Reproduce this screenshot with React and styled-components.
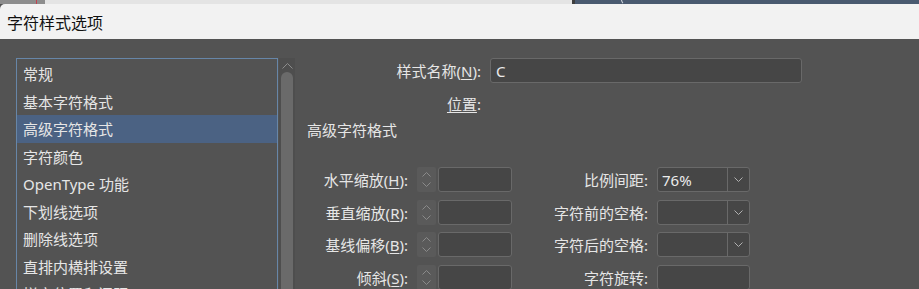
import React from "react";
import styled, { createGlobalStyle } from "styled-components";

const GlobalStyle = createGlobalStyle`
  html, body {
    margin: 0;
    padding: 0;
    width: 919px;
    height: 289px;
    overflow: hidden;
    background: #535353;
  }
  body {
    font-family: "Noto Sans", "Noto Sans CJK SC", sans-serif;
  }
`;

const categories = [
  "常规",
  "基本字符格式",
  "高级字符格式",
  "字符颜色",
  "OpenType 功能",
  "下划线选项",
  "删除线选项",
  "直排内横排设置",
  "拼音位置和间距"
];

const Window = styled.div`
  width: 919px;
  height: 289px;
  display: flex;
  flex-direction: column;
  background: #535353;
`;

// strip of the window that sits behind the dialog
const BackStrip = styled.div`
  height: 4px;
  display: flex;
  flex: none;
`;

const BackPiece = styled.div`
  width: ${p => p.w}px;
  flex: ${p => (p.grow ? 1 : "none")};
  background: ${p => p.color};
  position: relative;
`;

const Arc = styled.div`
  position: absolute;
  left: 46px;
  top: -6px;
  width: 9px;
  height: 9px;
  border: 1px solid #d8dde4;
  border-radius: 50%;
  border-right-color: transparent;
  border-bottom-color: transparent;
`;

const TitleBar = styled.div`
  height: 35px;
  flex: none;
  background: #f2f2f2;
  border-top-left-radius: 5px;
  display: flex;
  align-items: center;
  padding-left: 7px;
  font-family: "Noto Sans CJK SC", sans-serif;
  font-size: 16px;
  color: #111;
`;

const Body = styled.div`
  flex: 1;
  display: flex;
  overflow: hidden;
`;

const ListColumn = styled.div`
  display: flex;
  padding: 19px 0 0 16px;
  gap: 1px;
  flex: none;
`;

const ListBox = styled.div`
  width: 260px;
  border: 1px solid #6786a8;
  border-bottom: none;
  padding-top: 1px;
  display: flex;
  flex-direction: column;
`;

const Item = styled.div`
  height: 27.5px;
  flex: none;
  display: flex;
  align-items: center;
  padding-left: 6px;
  font-size: 15px;
  color: #e6e6e6;
  background: ${p => (p.selected ? "#4b6283" : "transparent")};
`;

const Scrollbar = styled.div`
  width: 16px;
  background: #4e4e4e;
  display: flex;
  flex-direction: column;
  align-items: center;
`;

const ScrollArrow = styled.svg`
  margin-top: 5px;
  flex: none;
`;

const Thumb = styled.div`
  width: 12px;
  flex: 1;
  margin-top: 3px;
  background: #6a6a6a;
  border-radius: 6px 6px 0 0;
`;

const Panel = styled.div`
  flex: 1;
  display: flex;
  flex-direction: column;
  padding: 19px 0 0 12px;
  font-size: 15px;
  color: #e6e6e6;
`;

const Row = styled.div`
  display: flex;
  align-items: center;
  height: ${p => p.h || 25}px;
  margin-top: ${p => p.mt || 0}px;
`;

const Label = styled.div`
  width: ${p => p.w}px;
  flex: none;
  text-align: right;
  white-space: nowrap;
  margin-right: 9px;
`;

const Key = styled.span`
  text-decoration: underline;
  text-underline-offset: 2px;
`;

const TextBox = styled.div`
  width: ${p => p.w}px;
  height: 25px;
  box-sizing: border-box;
  background: #464646;
  border: 1px solid #696969;
  border-radius: 3px;
  display: flex;
  align-items: center;
  padding-left: 5px;
  color: #ececec;
  font-size: 15px;
`;

const Heading = styled.div`
  height: 20px;
  margin-top: 6px;
  display: flex;
  align-items: center;
`;

const FieldGrid = styled.div`
  margin-top: 28px;
  display: flex;
  flex-direction: column;
  gap: 7.7px;
`;

const Spinner = styled.div`
  width: 19px;
  height: 25px;
  flex: none;
  background: #5a5a5a;
  border-radius: 2px;
  margin-right: 2px;
  display: flex;
  flex-direction: column;
  align-items: center;
  justify-content: center;
  gap: 5px;
`;

const Combo = styled.div`
  width: 93px;
  height: 25px;
  box-sizing: border-box;
  background: #464646;
  border: 1px solid #696969;
  border-radius: 3px;
  display: flex;
  flex: none;
`;

const ComboValue = styled.div`
  flex: 1;
  display: flex;
  align-items: center;
  padding-left: 4px;
  font-size: 15px;
  color: #ececec;
`;

const ComboButton = styled.div`
  width: 21px;
  border-left: 1px solid #696969;
  display: flex;
  align-items: center;
  justify-content: center;
`;

const Caret = ({ up, color = "#8a8a8a", w = 9 }) => (
  <svg width={w} height="5" viewBox="0 0 9 5">
    <path
      d={up ? "M0.5 4.5 L4.5 0.5 L8.5 4.5" : "M0.5 0.5 L4.5 4.5 L8.5 0.5"}
      fill="none"
      stroke={color}
      strokeWidth="1"
    />
  </svg>
);

const StepField = ({ label, k }) => (
  <>
    <Label w={101}>
      {label}(<Key>{k}</Key>):
    </Label>
    <Spinner>
      <Caret up />
      <Caret />
    </Spinner>
    <TextBox w={74} />
  </>
);

const ComboField = ({ label, value, plain }) => (
  <>
    <Label w={136}>{label}:</Label>
    {plain ? (
      <TextBox w={93} />
    ) : (
      <Combo>
        <ComboValue>{value}</ComboValue>
        <ComboButton>
          <Caret color="#b0b0b0" />
        </ComboButton>
      </Combo>
    )}
  </>
);

const rows = [
  { left: "水平缩放", k: "H", right: "比例间距", value: "76%" },
  { left: "垂直缩放", k: "R", right: "字符前的空格", value: "" },
  { left: "基线偏移", k: "B", right: "字符后的空格", value: "" },
  { left: "倾斜", k: "S", right: "字符旋转", plain: true }
];

export default function App() {
  return (
    <Window>
      <GlobalStyle />
      <BackStrip>
        <BackPiece w={36} color="#8d8d8d" />
        <BackPiece w={1} color="#c2414f" />
        <BackPiece w={8} color="#8d8d8d" />
        <BackPiece w={527} color="#e4e4e4" />
        <BackPiece w={3} color="#3e3e3e" />
        <BackPiece grow color="#4a5a70">
          <Arc />
        </BackPiece>
      </BackStrip>
      <TitleBar>字符样式选项</TitleBar>
      <Body>
        <ListColumn>
          <ListBox>
            {categories.map((c, i) => (
              <Item key={c} selected={i === 2}>
                {c}
              </Item>
            ))}
          </ListBox>
          <Scrollbar>
            <ScrollArrow width="11" height="6" viewBox="0 0 11 6">
              <path d="M0.5 5.5 L5.5 0.5 L10.5 5.5" fill="none" stroke="#8c8c8c" strokeWidth="1" />
            </ScrollArrow>
            <Thumb />
          </Scrollbar>
        </ListColumn>
        <Panel>
          <Row>
            <Label w={174}>
              样式名称(<Key>N</Key>):
            </Label>
            <TextBox w={312}>C</TextBox>
          </Row>
          <Row h={20} mt={10}>
            <Label w={174}>
              <Key>位置</Key>:
            </Label>
          </Row>
          <Heading>高级字符格式</Heading>
          <FieldGrid>
            {rows.map(r => (
              <Row key={r.left}>
                <StepField label={r.left} k={r.k} />
                <ComboField label={r.right} value={r.value} plain={r.plain} />
              </Row>
            ))}
          </FieldGrid>
        </Panel>
      </Body>
    </Window>
  );
}
